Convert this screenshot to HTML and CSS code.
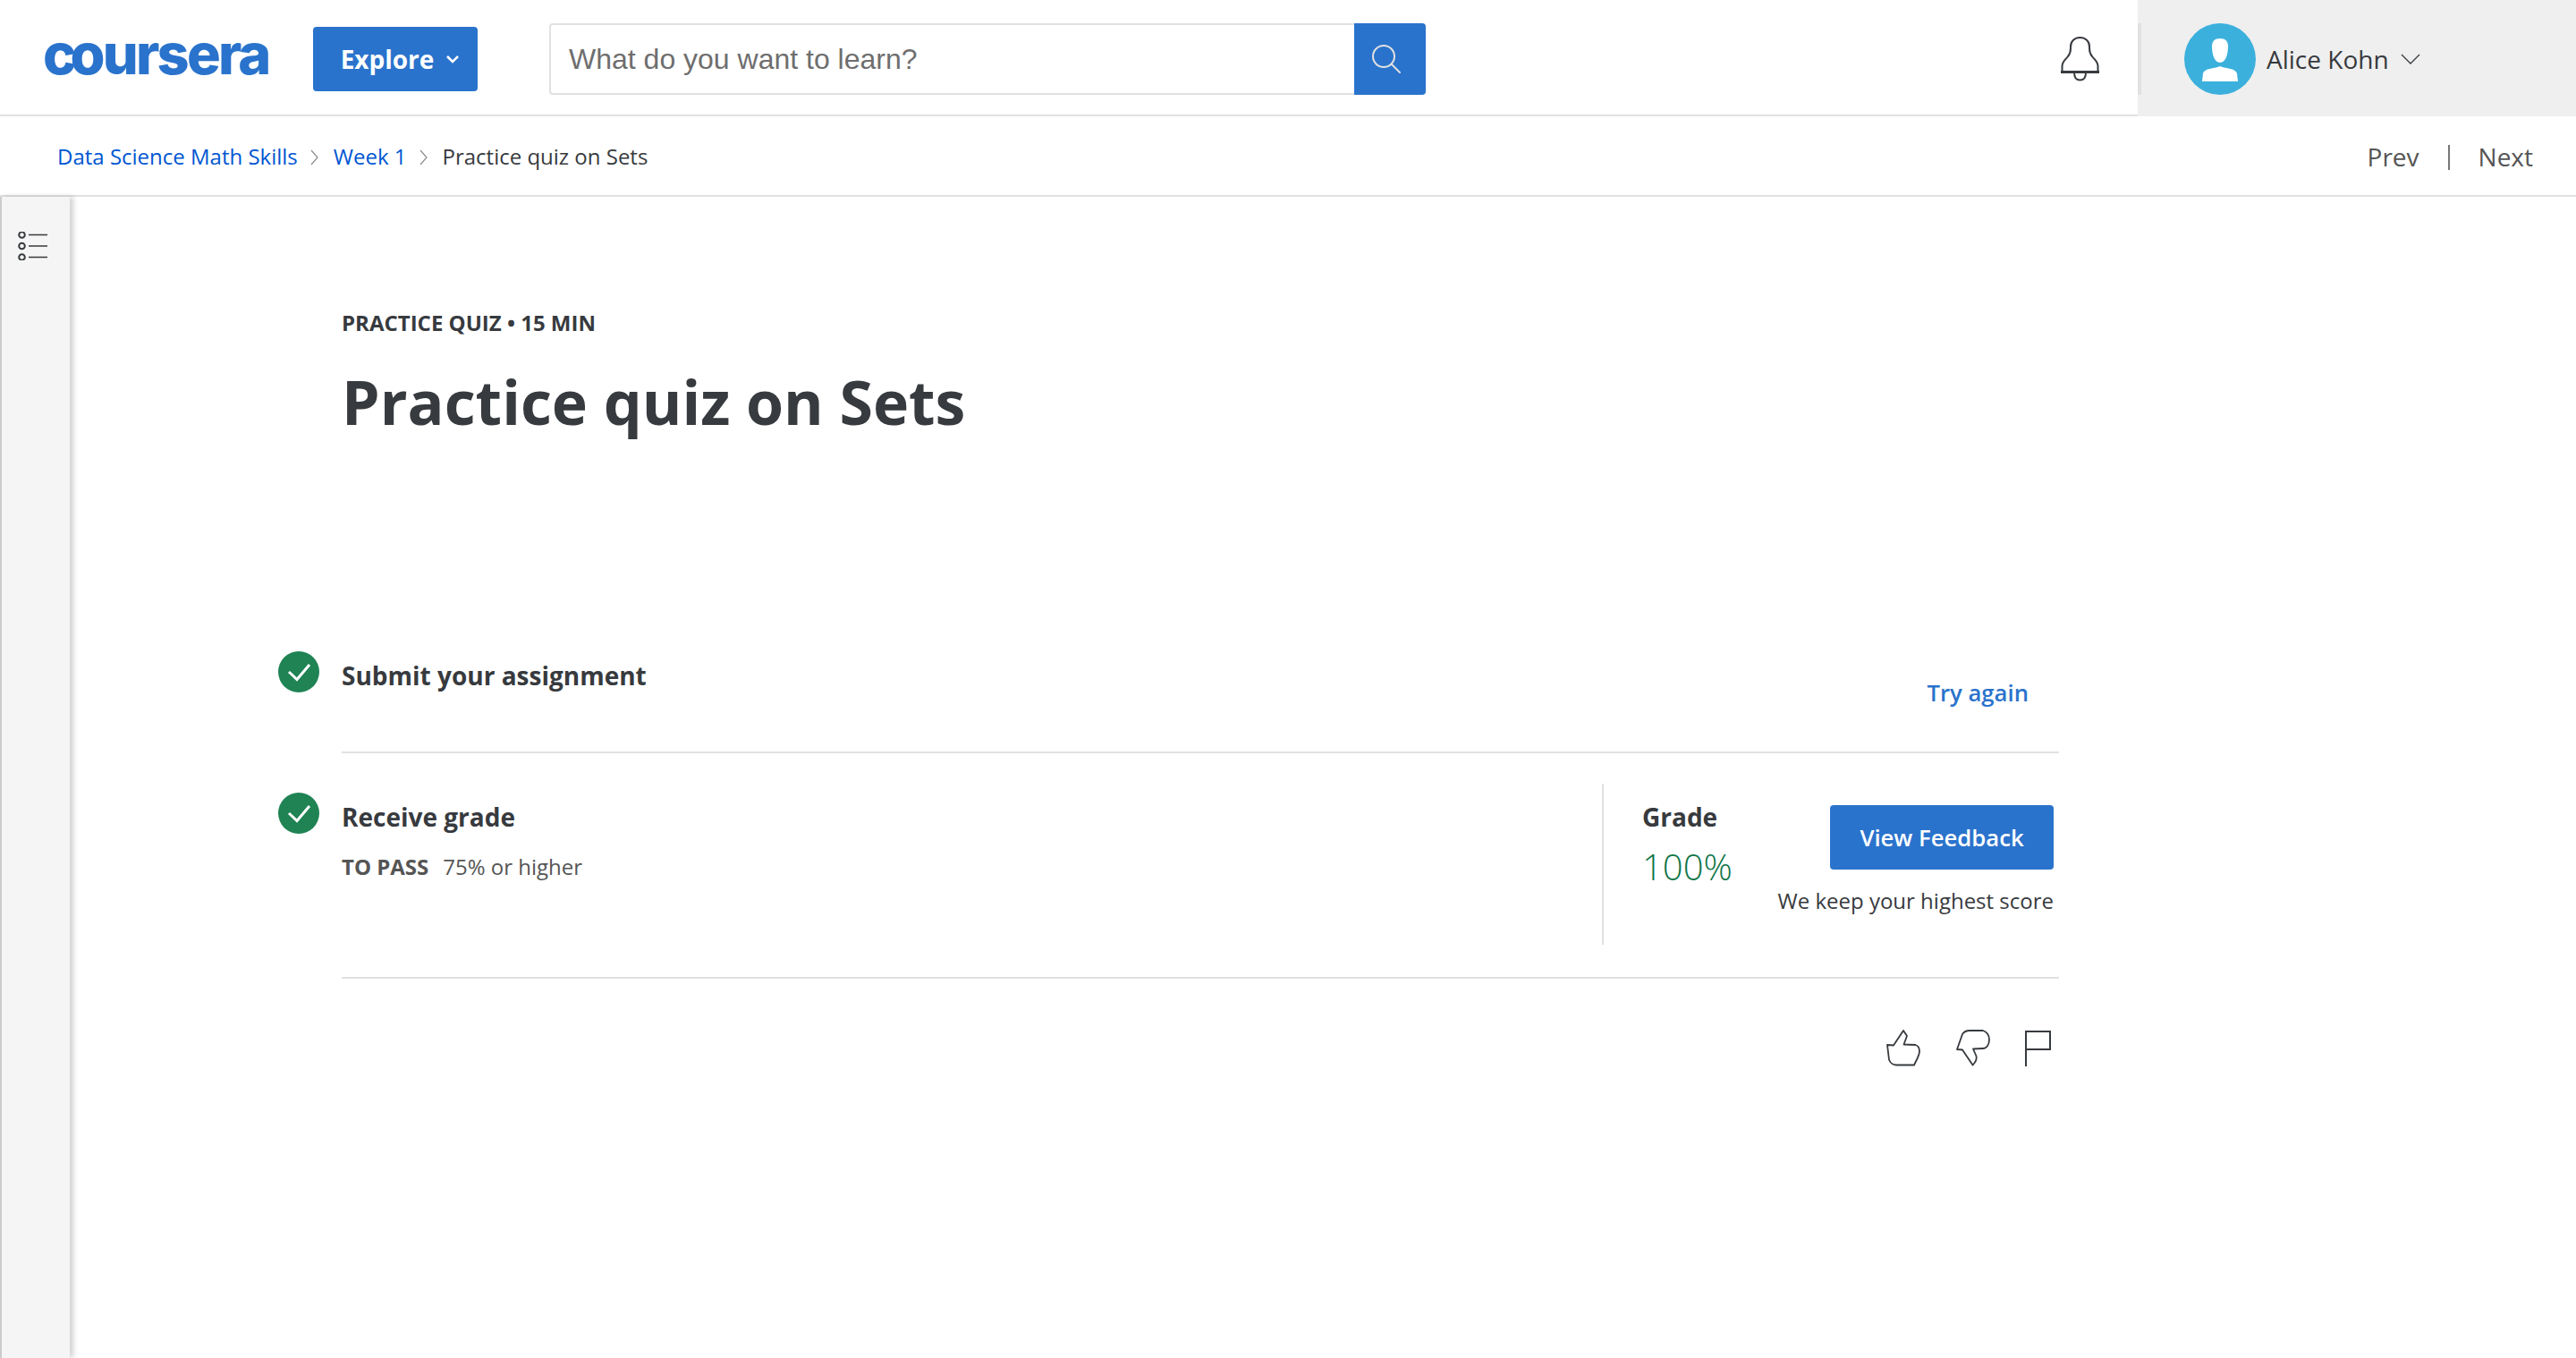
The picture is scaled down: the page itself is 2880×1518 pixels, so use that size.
FILE: index.html
```html
<!DOCTYPE html>
<html lang="en">
<head>
  <meta charset="UTF-8" />
  <title>Practice quiz on Sets</title>
  <link rel="stylesheet" href="styles.css">
</head>
<body>

  <header class="topbar">
    <div class="logo"><span class="logo-c">c</span>oursera</div>
    <button class="explore-btn">Explore
      <svg width="16" height="10" viewBox="0 0 16 10"><path d="M2 2l6 6 6-6" fill="none" stroke="#fff" stroke-width="2.6"/></svg>
    </button>
    <div class="search">
      <div class="search-input">What do you want to learn?</div>
      <div class="search-btn">
        <svg width="34" height="34" viewBox="0 0 34 34"><circle cx="13" cy="13" r="12" fill="none" stroke="#e1e1e1" stroke-width="2"/><path d="M22 22l9 9" fill="none" stroke="#e1e1e1" stroke-width="2" stroke-linecap="round"/></svg>
      </div>
    </div>
    <div class="bell">
      <svg width="43" height="50" viewBox="0 0 43 50"><path d="M1.500 39V33C1.500 28 5 26 8 22 10.500 19 11 17 11 13V11C11 5 15.500 1 21.500 1S32 5 32 11V13C32 17 32.500 19 35 22 38 26 41.500 28 41.500 33V39Z" fill="none" stroke="#373a3e" stroke-width="2"/><path d="M0 39.500h43" stroke="#373a3e" stroke-width="3"/><path d="M15 40c0 6 3 8.500 6.500 8.500S28 46 28 40" fill="none" stroke="#373a3e" stroke-width="2"/></svg>
    </div>
    <div class="user">
      <div class="avatar">
        <svg width="80" height="80" viewBox="0 0 80 80"><path d="M40 17c6 0 9 3 9 9 0 9-3 18-9 18s-9-9-9-18c0-6 3-9 9-9zM40 48c7 3 17 2 19 8l1 9H20l1-9c2-6 12-5 19-8z" fill="#fff"/></svg>
      </div>
      <span class="user-name">Alice Kohn</span>
      <svg width="22" height="12" viewBox="0 0 22 12"><path d="M1 1l10 10L21 1" fill="none" stroke="#373a3e" stroke-width="1.300"/></svg>
    </div>
  </header>

  <nav class="crumbs">
    <a class="crumb-link">Data Science Math Skills</a>
    <svg class="crumb-arrow" width="9" height="18" viewBox="0 0 9 18"><path d="M1 1l7 8-7 8" fill="none" stroke="#8c8c8c" stroke-width="1.200"/></svg>
    <a class="crumb-link">Week 1</a>
    <svg class="crumb-arrow" width="9" height="18" viewBox="0 0 9 18"><path d="M1 1l7 8-7 8" fill="none" stroke="#8c8c8c" stroke-width="1.200"/></svg>
    <span class="crumb-current">Practice quiz on Sets</span>
    <div class="pager">
      <a>Prev</a>
      <span class="pager-sep"></span>
      <a>Next</a>
    </div>
  </nav>

  <div class="page">
    <aside class="sidebar">
      <svg width="34" height="32" viewBox="0 0 34 32"><g fill="none" stroke="#373a3e"><circle cx="4.500" cy="3.500" r="3.300" stroke-width="2"/><circle cx="4.500" cy="16" r="3.300" stroke-width="2"/><circle cx="4.500" cy="28.500" r="3.300" stroke-width="2"/><path d="M12 3.500h21M12 16h21M12 28.500h21" stroke-width="1.600"/></g></svg>
    </aside>

    <main class="content">
      <div class="eyebrow">PRACTICE QUIZ • 15 MIN</div>
      <h1 class="title">Practice quiz on Sets</h1>

      <section class="step step-submit">
        <div class="check">
          <svg width="46" height="46" viewBox="0 0 46 46"><circle cx="23" cy="23" r="23" fill="#1f8354"/><path d="M12 23l9 8.500L35 15" fill="none" stroke="#fff" stroke-width="3"/></svg>
        </div>
        <div class="step-heading">Submit your assignment</div>
        <a class="try-again">Try again</a>
      </section>

      <section class="step step-grade">
        <div class="check">
          <svg width="46" height="46" viewBox="0 0 46 46"><circle cx="23" cy="23" r="23" fill="#1f8354"/><path d="M12 23l9 8.500L35 15" fill="none" stroke="#fff" stroke-width="3"/></svg>
        </div>
        <div class="step-body">
          <div class="step-heading">Receive grade</div>
          <div class="to-pass"><strong>TO PASS</strong>75% or higher</div>
        </div>
        <div class="grade-box">
          <div class="grade">
            <div class="grade-label">Grade</div>
            <div class="grade-value">100%</div>
          </div>
          <div class="feedback">
            <button class="feedback-btn">View Feedback</button>
            <div class="feedback-note">We keep your highest score</div>
          </div>
        </div>
      </section>

      <div class="actions">
        <svg class="thumb-up" width="38" height="42" viewBox="0 0 38 42"><path d="M1 17l7 .5L19 1l4 6-3.500 9.500 13 .5c3 1 4.500 4 4.500 7 0 5-3 9-6 15.500H11c-4 0-7-3-8-6z" fill="none" stroke="#373a3e" stroke-width="1.800" stroke-linejoin="round"/></svg>
        <svg width="38" height="42" viewBox="0 0 38 42"><path d="M1 22l6-17c2-3 5-4 8-4h15c4 1 7 5 7 10 0 6-3 10-7 10l-11 .5 3.500 8c1 4-1 7-4 10L7 22.500z" fill="none" stroke="#373a3e" stroke-width="1.800" stroke-linejoin="round"/></svg>
        <svg width="30" height="42" viewBox="0 0 30 42"><path d="M2 41V2h27v20H2" fill="none" stroke="#373a3e" stroke-width="2"/></svg>
      </div>
    </main>
  </div>

</body>
</html>
```

FILE: styles.css
```css
* {
  box-sizing: border-box;
}

body {
  font-family: "Open Sans", Arial, sans-serif;
  color: #373a3e;
  background: #fff;
  margin: 0;
  height: 1518px;
  overflow: hidden;
  display: flex;
  flex-direction: column;
}

svg {
  display: block;
  flex: none;
}

.topbar {
  height: 130px;
  display: flex;
  align-items: center;
  border-bottom: 2px solid #e1e1e1;
  padding-left: 48px;
  flex: none;
}

.logo {
  width: 302px;
  font-family: Inter, sans-serif;
  font-weight: 800;
  font-size: 63px;
  line-height: 80px;
  letter-spacing: -2.800px;
  color: #2a73cc;
  padding-bottom: 8px;
}

.logo-c {
  letter-spacing: -7px;
}

.explore-btn {
  width: 184px;
  height: 72px;
  margin-top: 4px;
  background: #2a73cc;
  color: #fff;
  border: none;
  border-radius: 4px;
  font-family: inherit;
  font-size: 28px;
  font-weight: 700;
  display: flex;
  align-items: center;
  justify-content: center;
  gap: 13px;
  padding: 0 0 0 11px;
}

.search {
  display: flex;
  margin: 4px 0 0 80px;
  height: 80px;
}

.search-input {
  width: 900px;
  border: 2px solid #e1e1e1;
  border-right: none;
  border-radius: 4px 0 0 4px;
  padding-left: 20px;
  font-family: "Liberation Sans", Arial, sans-serif;
  font-size: 32px;
  line-height: 76px;
  color: #6e6e6e;
  font-weight: 400;
}

.search-btn {
  width: 80px;
  background: #2a73cc;
  border-radius: 0 4px 4px 0;
  display: flex;
  align-items: center;
  justify-content: center;
  padding: 2px 6px 0 0;
}

.bell {
  margin: 4px 43px 0 auto;
}

.user {
  width: 490px;
  height: 130px;
  align-self: flex-start;
  background: #efefef;
  display: flex;
  align-items: center;
  padding: 2px 0 0 52px;
  position: relative;
}

.user::before {
  content: "";
  position: absolute;
  left: 0;
  top: 26px;
  width: 4px;
  height: 80px;
  background: #e1e1e1;
}

.avatar {
  width: 80px;
  height: 80px;
  border-radius: 50%;
  background: #3cb0dc;
}

.user-name {
  font-size: 28px;
  margin: 0 13px 0 12px;
}

.crumbs {
  height: 90px;
  flex: none;
  display: flex;
  align-items: center;
  border-bottom: 2px solid #e1e1e1;
  padding: 0 48px 0 64px;
  font-size: 24px;
}

.crumb-link {
  color: #0056d2;
}

.crumb-arrow {
  margin: 4px 17px 0 14px;
}

.crumb-current {
  color: #373a3e;
}

.pager {
  margin-left: auto;
  display: flex;
  align-items: center;
  padding-top: 2px;
  font-size: 28px;
  color: #555;
}

.pager-sep {
  width: 2px;
  height: 28px;
  background: #777;
  margin: 2px 32px 0;
}

.page {
  flex: 1;
  display: flex;
}

.sidebar {
  width: 78px;
  flex: none;
  background: #f5f5f5;
  border-left: 2px solid #ccc;
  box-shadow: 4px 0 6px rgba(0, 0, 0, 0.18);
  padding: 39px 0 0 18px;
}

.content {
  width: 1920px;
  margin-left: 304px;
  padding-top: 123px;
}

.eyebrow {
  font-size: 24px;
  font-weight: 700;
  line-height: 36px;
}

.title {
  font-size: 68px;
  font-weight: 700;
  line-height: 90px;
  margin: 25px 0 0;
}

.step {
  display: flex;
  position: relative;
  border-bottom: 2px solid #e1e1e1;
}

.step-submit {
  height: 114px;
  margin-top: 234px;
  padding-top: 8px;
}

.step-grade {
  height: 252px;
  padding-top: 34px;
}

.check {
  position: absolute;
  left: -71px;
  top: 0;
}

.step-grade .check {
  top: 44px;
}

.step-heading {
  font-size: 28px;
  font-weight: 700;
  line-height: 38px;
}

.try-again {
  position: absolute;
  right: 34px;
  top: 29px;
  font-size: 25.700px;
  font-weight: 600;
  color: #2a73cc;
}

.step-body {
  flex: 1;
  padding-top: 18px;
}

.to-pass {
  font-size: 24px;
  line-height: 36px;
  margin-top: 19px;
  color: #555;
}

.to-pass strong {
  margin-right: 16px;
}

.grade-box {
  width: 511px;
  height: 180px;
  border-left: 2px solid #e1e1e1;
  padding: 18px 6px 0 43px;
  display: flex;
  justify-content: space-between;
}

.grade-label {
  font-size: 28px;
  font-weight: 700;
  line-height: 38px;
}

.grade-value {
  font-size: 40px;
  font-weight: 300;
  line-height: 54px;
  color: #107548;
  margin-top: 10px;
}

.feedback {
  display: flex;
  flex-direction: column;
  align-items: flex-end;
  padding-top: 6px;
}

.feedback-btn {
  width: 250px;
  height: 72px;
  background: #2a73cc;
  color: #fff;
  border: none;
  border-radius: 4px;
  font-family: inherit;
  font-size: 25.700px;
  font-weight: 600;
  padding: 0;
}

.feedback-note {
  font-size: 24px;
  line-height: 36px;
  margin-top: 17px;
}

.actions {
  display: flex;
  justify-content: flex-end;
  gap: 38px;
  padding: 57px 9px 0 0;
}

.thumb-up {
  margin-right: 2px;
}
```
